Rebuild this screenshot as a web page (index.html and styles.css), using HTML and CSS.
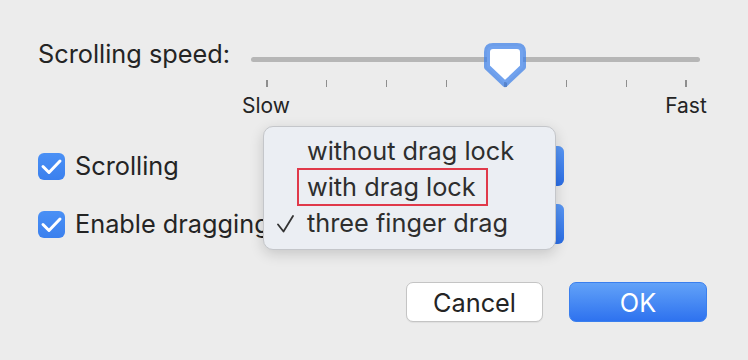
FILE: index.html
```html
<!DOCTYPE html>
<html>
<head>
<meta charset="utf-8">
<link rel="stylesheet" href="styles.css">
</head>
<body>
<div class="dialog">
  <div class="speed-row">
    <div class="speed-label">Scrolling speed:</div>
    <div class="slider">
      <div class="rail">
        <div class="track"></div>
        <div class="ticks">
          <span></span><span></span><span></span><span></span><span></span><span></span><span></span><span></span>
        </div>
        <svg class="thumb" width="42" height="45" viewBox="0 0 42 45">
          <path d="M9 3 H33 Q39 3 39 9 V24 L21 41 L3 24 V9 Q3 3 9 3 Z" fill="#fff" stroke="rgba(58,126,232,0.72)" stroke-width="6" stroke-linejoin="round"/>
          <line x1="21" y1="39" x2="21" y2="44" stroke="rgba(40,70,130,0.6)" stroke-width="1"/>
        </svg>
      </div>
      <div class="scale"><span>Slow</span><span>Fast</span></div>
    </div>
  </div>

  <div class="option-row">
    <label class="check">
      <span class="box"><svg width="27" height="27" viewBox="0 0 27 27"><path d="M5 13.5 L11 19.5 L22 8" fill="none" stroke="#fff" stroke-width="3" stroke-linecap="round" stroke-linejoin="round"/></svg></span>
      <span class="check-text">Scrolling</span>
    </label>
    <div class="popup"><span class="popup-cap"></span></div>
  </div>

  <div class="option-row second">
    <label class="check">
      <span class="box"><svg width="27" height="27" viewBox="0 0 27 27"><path d="M5 13.5 L11 19.5 L22 8" fill="none" stroke="#fff" stroke-width="3" stroke-linecap="round" stroke-linejoin="round"/></svg></span>
      <span class="check-text">Enable dragging</span>
    </label>
    <div class="popup"><span class="popup-cap"></span></div>
  </div>

  <div class="buttons">
    <button class="btn cancel">Cancel</button>
    <button class="btn ok">OK</button>
  </div>

  <div class="menu">
    <div class="menu-item">without drag lock</div>
    <div class="menu-item"><span class="marked">with drag lock</span></div>
    <div class="menu-item checked">
      <svg class="tick" width="17" height="18" viewBox="0 0 17 18"><path d="M1 9.5 L6.5 16.5 L16 1" fill="none" stroke="#333" stroke-width="1.8" stroke-linecap="round" stroke-linejoin="round"/></svg>
      three finger drag
    </div>
  </div>
</div>
</body>
</html>
```

FILE: styles.css
```css
html, body {
  margin: 0;
  padding: 0;
}

body {
  width: 748px;
  height: 360px;
  background: #ececec;
  font-family: "Inter", "Liberation Sans", sans-serif;
  color: #242424;
  overflow: hidden;
}

.dialog {
  position: relative;
  height: 360px;
  box-sizing: border-box;
  padding: 39px 41px 0 38px;
}

.speed-row {
  display: flex;
  align-items: flex-start;
}

.speed-label {
  width: 213px;
  font-size: 25.3px;
  line-height: 30px;
  white-space: nowrap;
}

.slider {
  width: 449px;
  margin-top: 4px;
}

.rail {
  position: relative;
  padding-top: 14px;
}

.track {
  height: 5px;
  border-radius: 3px;
  background: #b6b6b6;
}

.ticks {
  display: flex;
  justify-content: space-between;
  margin-top: 18px;
  padding: 0 13px 0 15px;
  height: 7px;
}

.ticks span {
  width: 1.5px;
  height: 7px;
  background: #8e8e8e;
}

.thumb {
  position: absolute;
  left: 233px;
  top: 0;
}

.scale {
  display: flex;
  justify-content: space-between;
  margin: 7px -11px 0 -10px;
  font-size: 21px;
  line-height: 24px;
}

.scale span {
  width: 50px;
  text-align: center;
}

.option-row {
  display: flex;
  align-items: center;
  height: 40px;
  margin-top: 28px;
}

.option-row.second {
  margin-top: 18px;
}

.check {
  display: flex;
  align-items: center;
  gap: 10px;
  width: 268px;
  font-size: 25.3px;
  line-height: 30px;
  white-space: nowrap;
}

.box {
  display: block;
  width: 27px;
  height: 27px;
  border-radius: 6px;
  background: linear-gradient(#4a90f5, #3b80ee);
}

.box svg {
  display: block;
}

.popup {
  position: relative;
  width: 258px;
  height: 40px;
  box-sizing: border-box;
  border: 1px solid #c6c6c6;
  border-radius: 6px;
  background: #fff;
}

.popup-cap {
  position: absolute;
  right: -1px;
  top: -1px;
  bottom: -1px;
  width: 24px;
  border-radius: 0 6px 6px 0;
  background: linear-gradient(#5a98f5, #2a6de6);
}

.buttons {
  display: flex;
  justify-content: flex-end;
  gap: 26px;
  margin-top: 38px;
}

.btn {
  height: 40px;
  border-radius: 7px;
  font-family: "Inter", "Liberation Sans", sans-serif;
  font-size: 25.3px;
  padding: 0;
}

.cancel {
  width: 137px;
  background: #fff;
  color: #242424;
  border: 1px solid #c4c4c4;
  box-shadow: 0 1px 1px rgba(0, 0, 0, 0.06);
}

.ok {
  width: 138px;
  color: #fff;
  border: 1px solid #3a7fee;
  background: linear-gradient(#62a2f8, #2e72ef);
}

.menu {
  position: absolute;
  left: 263px;
  top: 126px;
  width: 293px;
  height: 124px;
  box-sizing: border-box;
  padding: 6px 0 10px 0;
  border: 1px solid #c4c6ca;
  border-radius: 10px;
  background: #ebeef3;
  box-shadow: 0 4px 14px rgba(0, 0, 0, 0.16);
  color: #2e2e2e;
}

.menu-item {
  position: relative;
  padding-left: 43px;
  font-size: 25.3px;
  line-height: 36px;
  white-space: nowrap;
}

.marked {
  position: relative;
}

.marked::after {
  content: "";
  position: absolute;
  left: -10px;
  right: -12px;
  top: -3px;
  bottom: -4px;
  border: 2px solid #e0394a;
}

.tick {
  position: absolute;
  left: 13px;
  top: 10px;
}
```
